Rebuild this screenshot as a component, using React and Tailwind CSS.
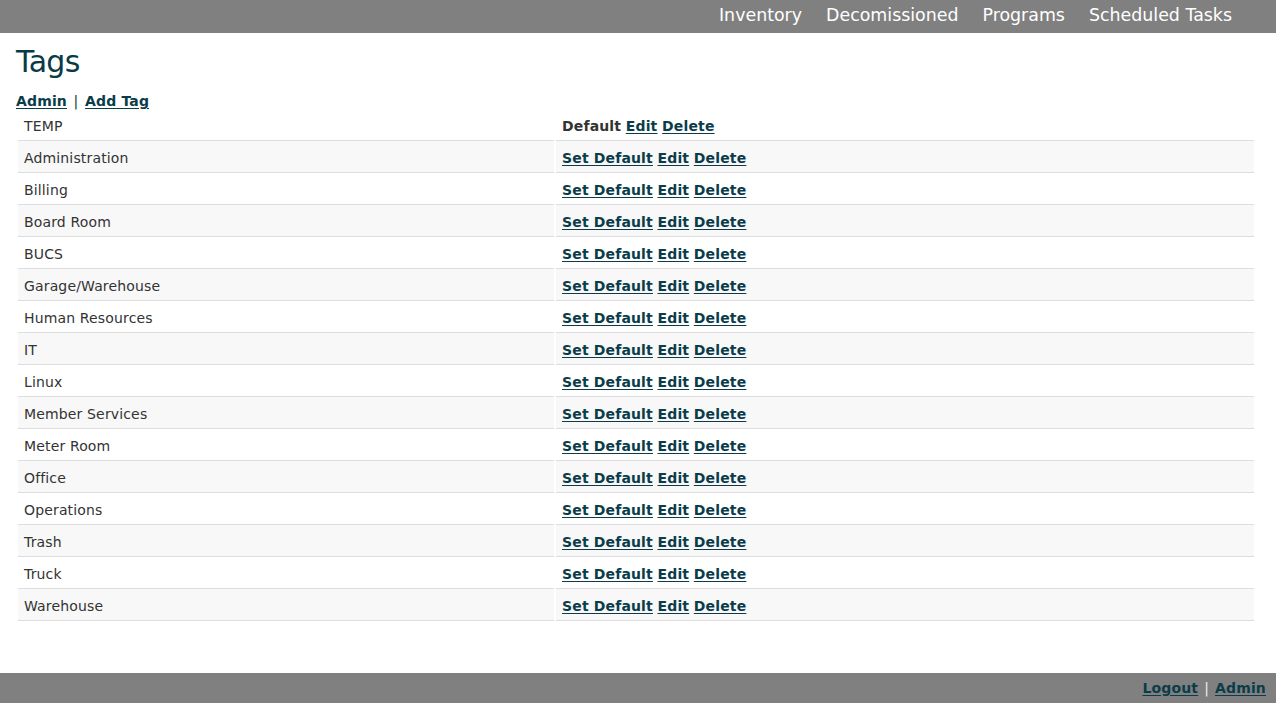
import React from "react";

const tags = [
  "TEMP",
  "Administration",
  "Billing",
  "Board Room",
  "BUCS",
  "Garage/Warehouse",
  "Human Resources",
  "IT",
  "Linux",
  "Member Services",
  "Meter Room",
  "Office",
  "Operations",
  "Trash",
  "Truck",
  "Warehouse",
];

const font = { fontFamily: '"DejaVu Sans", Verdana, sans-serif' };

function L({ children }) {
  return (
    <a href="#" className="font-bold text-[#0b3c4a] underline underline-offset-[2px]">
      {children}
    </a>
  );
}

export default function App() {
  return (
    <div className="min-h-screen flex flex-col bg-white text-[#333] text-[14px] tracking-[0.15px]" style={font}>
      <header className="h-[33px] bg-[#808080] flex items-center justify-end pr-[44px] pb-[2px] gap-[24px] text-white text-[17.4px] tracking-normal">
        <a href="#">Inventory</a>
        <a href="#">Decomissioned</a>
        <a href="#">Programs</a>
        <a href="#">Scheduled Tasks</a>
      </header>
      <main className="px-4">
        <h1 className="mt-[11px] text-[30px] leading-[36px] tracking-[-0.7px] text-[#0a3a47]">Tags</h1>
        <div className="mt-[13px] leading-[16px]">
          <L>Admin</L> <span className="text-[#0b3c4a] mx-[2px]">|</span> <L>Add Tag</L>
        </div>
        <table className="w-[1240px] border-separate border-spacing-x-[2px] border-spacing-y-0">
          <tbody>
            {tags.map((t, i) => (
              <tr key={t} className={i % 2 === 1 ? "bg-[#f8f8f8]" : "bg-white"}>
                <td className="w-[536px] pl-[6px] pt-[7px] pb-[4px] leading-[20px] border-b border-[#dddddd]">{t}</td>
                <td className="pl-[6px] pt-[7px] pb-[4px] leading-[20px] border-b border-[#dddddd]">
                  {i === 0 ? (
                    <>
                      <span className="font-bold">Default</span> <L>Edit</L> <L>Delete</L>
                    </>
                  ) : (
                    <>
                      <L>Set Default</L> <L>Edit</L> <L>Delete</L>
                    </>
                  )}
                </td>
              </tr>
            ))}
          </tbody>
        </table>
      </main>
      <footer className="mt-auto h-[30px] bg-[#808080] flex items-center justify-end pr-[10px] leading-[17px]">
        <L>Logout</L>
        <span className="text-[#eeeeee] mx-[6px]">|</span>
        <L>Admin</L>
      </footer>
    </div>
  );
}
